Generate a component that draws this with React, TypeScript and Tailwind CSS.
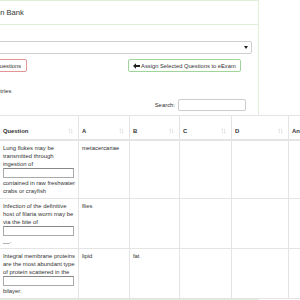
import React from "react";

function SortIcon() {
  return (
    <svg width="5" height="6" viewBox="0 0 10 12" className="shrink-0">
      <path d="M2.5 1 L0.5 4 H1.8 V11 H3.2 V4 H4.5 Z" fill="#dcdcdc" />
      <path d="M7.5 11 L5.5 8 H6.8 V1 H8.2 V8 H9.5 Z" fill="#dcdcdc" />
    </svg>
  );
}

function ArrowLeft() {
  return (
    <svg width="7" height="6" viewBox="0 0 14 12" className="shrink-0">
      <path d="M0 6 L6 0.5 V4 H14 V8 H6 V11.5 Z" fill="#222" />
    </svg>
  );
}

const rows = [
  {
    before: "Lung flukes may be transmitted through ingestion of",
    after: "contained in raw freshwater crabs or crayfish",
    a: "metacercariae",
    b: "",
  },
  {
    before: "Infection of the definitive host of filaria worm may be via the bite of",
    after: "__.",
    a: "flies",
    b: "",
  },
  {
    before: "Integral membrane proteins are the most abundant type of protein scattered in the",
    after: "bilayer.",
    a: "lipid",
    b: "fat",
  },
];

const headers = ["Question", "A", "B", "C", "D", "Answer"];

export default function App() {
  return (
    <div className="w-[300px] h-[300px] overflow-hidden bg-white font-['Liberation_Sans',Arial,sans-serif] text-[#333] text-[5.9px] leading-[8px]">
      {/* panel, left part cropped by the shot */}
      <div className="-ml-[33px] w-[292px] h-[300px] border border-[#e2efd8]">
        <div className="h-[24px] px-[6px] flex items-center border-b border-[#e2efd8] text-[7.6px]">
          Question Bank
        </div>

        <div className="px-[6px] pt-[16px]">
          <div className="h-[13px] border border-[#cfcfcf] rounded-[2px] flex items-center justify-end pr-[3px]">
            <span className="w-0 h-0 border-l-[2px] border-r-[2px] border-t-[3px] border-l-transparent border-r-transparent border-t-[#222]" />
          </div>

          <div className="mt-[5px] -ml-[3px] flex text-[5.75px]">
            <button className="h-[13px] px-[5px] border border-[#e39494] rounded-[2px] bg-white">
              Delete Questions
            </button>
            <button className="ml-[101px] h-[13px] px-[4px] border border-[#9fd49a] rounded-[2px] bg-white flex items-center gap-[1px]">
              <ArrowLeft />
              Assign Selected Questions to eExam
            </button>
          </div>

          <div className="mt-[13px] -ml-[30px] flex items-center gap-[2px]">
            <span>Show</span>
            <span className="w-[31px] h-[12px] border border-[#ccc] rounded-[2px]" />
            <span>entries</span>
          </div>

          <div className="mt-[2px] flex items-center justify-end gap-[3px] pr-[6px]">
            <span>Search:</span>
            <span className="w-[68px] h-[12px] border border-[#ccc] rounded-[2px]" />
          </div>

          <table className="mt-[4px] table-fixed w-[440px] border-collapse bg-white relative">
            <colgroup>
              <col className="w-[25px]" />
              <col className="w-[79px]" />
              <col className="w-[51px]" />
              <col className="w-[50px]" />
              <col className="w-[52px]" />
              <col className="w-[57px]" />
              <col className="w-[60px]" />
              <col className="w-[66px]" />
            </colgroup>
            <thead>
              <tr className="h-[24px] border-t border-b-2 border-[#e4e4e4]">
                <th className="border-r border-[#e4e4e4]" />
                {headers.map((h) => (
                  <th key={h} className="border-r border-[#e4e4e4] align-bottom text-left font-bold pl-[3.4px] pr-[5px] pb-[4px]">
                    <div className="flex items-center justify-between">
                      <span>{h}</span>
                      <SortIcon />
                    </div>
                  </th>
                ))}
                <th />
              </tr>
            </thead>
            <tbody>
              {rows.map((r, i) => (
                <tr key={i} className="border-b border-[#e4e4e4] align-top">
                  <td className="border-r border-[#e4e4e4]" />
                  <td className="border-r border-[#e4e4e4] pl-[3.4px] pr-[2px] py-[3px] font-normal">
                    <div>{r.before}</div>
                    <div className="w-[71px] h-[10px] border border-[#aaa] border-t-[#888] my-[0.5px]" />
                    <div>{r.after}</div>
                  </td>
                  <td className="border-r border-[#e4e4e4] px-[3.4px] py-[3px]">{r.a}</td>
                  <td className="border-r border-[#e4e4e4] px-[3.4px] py-[3px]">{r.b}</td>
                  <td className="border-r border-[#e4e4e4] px-[3.4px] py-[3px]" />
                  <td className="border-r border-[#e4e4e4] px-[3.4px] py-[3px]" />
                  <td className="border-r border-[#e4e4e4] px-[3.4px] py-[3px]" />
                  <td />
                </tr>
              ))}
            </tbody>
          </table>
        </div>
      </div>
    </div>
  );
}
